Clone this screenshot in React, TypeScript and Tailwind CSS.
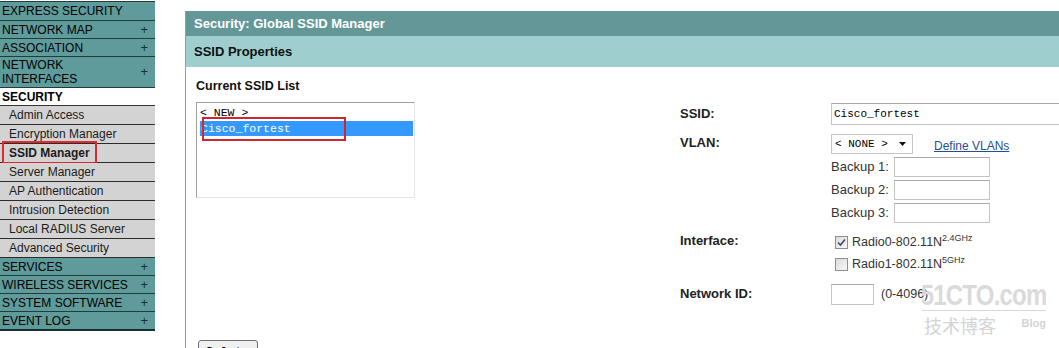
import React from 'react';

const topItems = [
  { label: 'EXPRESS SECURITY', plus: false },
  { label: 'NETWORK MAP', plus: true },
  { label: 'ASSOCIATION', plus: true },
];

const subItems = [
  'Admin Access',
  'Encryption Manager',
  'SSID Manager',
  'Server Manager',
  'AP Authentication',
  'Intrusion Detection',
  'Local RADIUS Server',
  'Advanced Security',
];

const bottomItems = ['SERVICES', 'WIRELESS SERVICES', 'SYSTEM SOFTWARE', 'EVENT LOG'];

function MenuRow({ label, plus, first, last }: { label: string; plus: boolean; first?: boolean; last?: boolean }) {
  return (
    <div
      className={`shrink-0 flex items-center justify-between bg-[#5f9b9b] pl-[2px] pr-[7px] text-[12px] leading-none text-black border-b border-[#1f3d3d] ${
        first ? 'h-[20px] border-t' : 'h-[18px]'
      } ${last ? 'border-b-2 border-b-[#143030] h-[19px]' : ''}`}
    >
      <span>{label}</span>
      {plus && <span className="text-[13px] text-[#1a2f2f]">+</span>}
    </div>
  );
}

function Sidebar() {
  return (
    <div className="w-[155px] shrink-0 flex flex-col pt-[1px]">
      {topItems.map((it, i) => (
        <MenuRow key={it.label} label={it.label} plus={it.plus} first={i === 0} />
      ))}
      <div className="shrink-0 flex items-center justify-between h-[31px] bg-[#5f9b9b] pl-[2px] pr-[7px] text-[12px] leading-[14px] text-black border-b border-[#1f3d3d]">
        <span>
          NETWORK
          <br />
          INTERFACES
        </span>
        <span className="text-[13px] text-[#1a2f2f]">+</span>
      </div>
      <div className="shrink-0 h-[18px] flex items-center pl-[2px] text-[12px] font-bold text-black border-b border-[#333]">
        SECURITY
      </div>
      {subItems.map((s) => (
        <div
          key={s}
          className={`shrink-0 relative h-[19px] flex items-center pl-[9px] bg-[#d3d3d3] text-[12px] text-[#1b1b1b] border-b border-[#2c2c2c] ${
            s === 'SSID Manager' ? 'font-bold' : ''
          }`}
        >
          {s}
          {s === 'SSID Manager' && (
            <div className="absolute left-[2px] -top-[3px] w-[95px] h-[23px] border-2 border-[#de2a2f]" />
          )}
        </div>
      ))}
      {bottomItems.map((b, i) => (
        <MenuRow key={b} label={b} plus={true} last={i === bottomItems.length - 1} />
      ))}
    </div>
  );
}

function Checkbox({ checked }: { checked: boolean }) {
  return (
    <div className="w-[13px] h-[13px] border border-[#8e8f8f] bg-gradient-to-br from-[#dcdcdc] to-[#f8f8f8] flex items-center justify-center">
      {checked && (
        <svg width="9" height="9" viewBox="0 0 9 9">
          <path d="M1 4.5 L3.5 7 L8 1.5" fill="none" stroke="#3d4a6b" strokeWidth="1.6" />
        </svg>
      )}
    </div>
  );
}

function Field({ w }: { w: string }) {
  return <div className={`${w} h-[20px] border border-[#c4c4c4] border-t-[#a9a9a9] bg-white`} />;
}

export default function App() {
  return (
    <div className="relative w-[1059px] h-[348px] overflow-hidden bg-white flex items-start font-['Liberation_Sans',Arial,sans-serif]">
      <Sidebar />

      <div className="ml-[30px] mt-[11px] flex-1 min-w-[880px] h-[400px] border-l border-[#9a9a9a] flex flex-col">
        <div className="shrink-0 h-[25px] bg-[#649898] flex items-center pl-[8px] text-[13px] font-bold text-white">
          Security: Global SSID Manager
        </div>
        <div className="shrink-0 h-[31px] bg-[#9ecece] flex items-center pl-[8px] text-[13px] font-bold text-[#111]">
          SSID Properties
        </div>

        <div className="flex shrink-0">
          {/* SSID list */}
          <div className="w-[494px] shrink-0 pl-[10px] pt-[12px]">
            <div className="text-[12.5px] font-bold text-[#111] leading-[15px]">Current SSID List</div>
            <div className="relative mt-[8px] w-[219px] h-[96px] border border-[#a0a0a0] border-r-[#e4e4e4] border-b-[#e4e4e4] pt-[2px] font-['Liberation_Mono',monospace] text-[11.5px] leading-[15px] text-black">
              <div className="pl-[3px] h-[15px]">&lt; NEW &gt;</div>
              <div className="ml-[3px] mr-[1px] mt-[1px] h-[15px] pl-[1px] bg-[#3399ff] text-white">Cisco_fortest</div>
              <div className="absolute left-[5px] top-[14px] w-[144px] h-[24px] border-2 border-[#cf2630]" />
            </div>
            <div className="mt-[142px] ml-[2px] w-[60px] h-[22px] border border-[#707070] rounded-[3px] bg-[#f0f0f0] text-center pt-[3px] font-['Liberation_Mono',monospace] text-[12px] text-black">
              Delete
            </div>
          </div>

          {/* Properties form */}
          <div className="flex-1 pt-[36px] text-[13px] text-[#222]">
            <div className="flex items-center h-[22px]">
              <div className="w-[151px] font-bold">SSID:</div>
              <div className="w-[260px] h-[22px] border border-[#c4c4c4] border-t-[#a9a9a9] pl-[2px] flex items-center font-['Liberation_Mono',monospace] text-[11px] text-black">
                Cisco_fortest
              </div>
            </div>

            <div className="flex mt-[9px]">
              <div className="w-[151px] font-bold -mt-[1px]">VLAN:</div>
              <div className="flex flex-col">
                <div className="flex items-start">
                  <div className="w-[82px] h-[20px] border border-[#c4c4c4] flex items-center justify-between pl-[3px] pr-[6px] font-['Liberation_Mono',monospace] text-[11px] text-black">
                    <span>&lt; NONE &gt;</span>
                    <svg width="7" height="4" viewBox="0 0 7 4">
                      <path d="M0 0 H7 L3.5 4 Z" fill="#111" />
                    </svg>
                  </div>
                  <a className="ml-[21px] mt-[6px] text-[12px] leading-[12px] text-[#1f4f9a] underline">Define VLANs</a>
                </div>
                {[1, 2, 3].map((n) => (
                  <div key={n} className="flex items-center mt-[3px] h-[20px]">
                    <span className="w-[63px] text-[#333]">Backup {n}:</span>
                    <Field w="w-[96px]" />
                  </div>
                ))}
              </div>
            </div>

            <div className="flex mt-[8px]">
              <div className="w-[151px] font-bold">Interface:</div>
              <div className="flex flex-col text-[12.5px] text-[#333]">
                {[
                  { c: true, t: 'Radio0-802.11N', s: '2.4GHz' },
                  { c: false, t: 'Radio1-802.11N', s: '5GHz' },
                ].map((r) => (
                  <div key={r.t} className="flex items-center h-[22px]">
                    <div className="ml-[4px] mr-[4px]">
                      <Checkbox checked={r.c} />
                    </div>
                    <span>
                      {r.t}
                      <sup className="text-[9px] top-[-5px]">{r.s}</sup>
                    </span>
                  </div>
                ))}
              </div>
            </div>

            <div className="flex items-center mt-[8px] h-[22px]">
              <div className="w-[151px] font-bold">Network ID:</div>
              <div className="w-[43px] h-[21px] border border-[#c4c4c4] border-t-[#a9a9a9]" />
              <span className="ml-[7px] text-[12.5px] text-[#333]">(0-4096)</span>
            </div>
          </div>
        </div>
      </div>

      {/* watermark */}
      <div className="absolute left-[920px] top-[280px] w-[128px] flex flex-col items-center pointer-events-none select-none">
        <div className="text-[30px] leading-[30px] font-bold text-[#dadada] tracking-[-1px] scale-x-80 whitespace-nowrap">51CTO.com</div>
        <div className="w-[124px] h-[1px] bg-[#d8d8d8]" />
        <div className="flex items-center justify-between mt-[4px] w-[124px] pl-[2px]">
          <span className="text-[18px] leading-[20px] text-[#d4d4d4] font-['Noto_Sans_CJK_SC',sans-serif]">技术博客</span>
          <span className="text-[11px] font-bold text-[#d4d4d4] -mt-[4px]">Blog</span>
        </div>
      </div>
    </div>
  );
}
